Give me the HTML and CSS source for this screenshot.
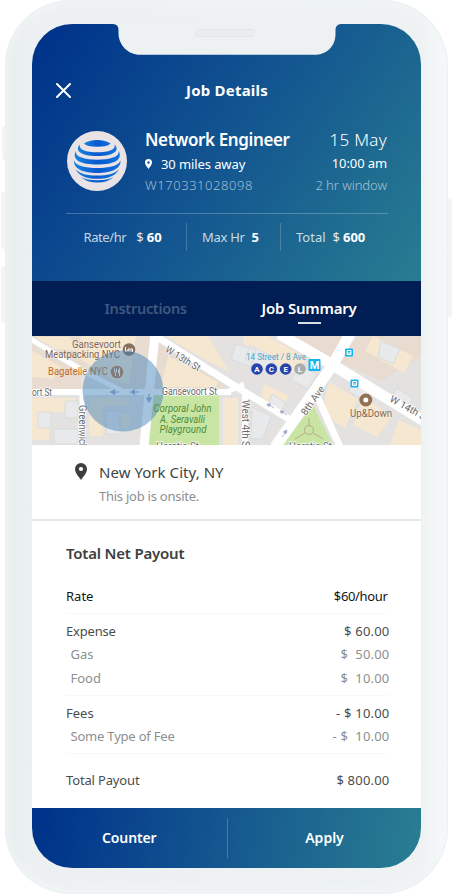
FILE: index.html
```html
<!DOCTYPE html>
<html lang="en">
<head>
<meta charset="utf-8">
<title>Job Details</title>
<link rel="stylesheet" href="styles.css">
</head>
<body>
<div class="phone">
  <span class="key key-mute"></span><span class="key key-up"></span><span class="key key-down"></span><span class="key key-power"></span>
  <div class="body">
  <main class="screen">
    <svg class="notch" viewBox="0 0 230 32" width="230" height="32">
      <path d="M0 0H225Q219.500 .5 219.500 6V10C219.500 22 211 30.800 198 30.800H24C12 30.800 2.500 21 2.500 9V6Q2.500 0 -3 0Z" transform="translate(4 0)" fill="#edf1f2"/>
      <rect x="83.500" y="5.500" width="59" height="7" rx="3" fill="#e9edee" stroke="#e2e6e7"/>
    </svg>
    <header class="header">
      <div class="titlebar">
        <svg class="close" viewBox="0 0 15 15" width="15" height="15"><path d="M1 1L14 14M14 1L1 14" stroke="#fff" stroke-width="2" stroke-linecap="round"/></svg>
        <h1 class="title">Job Details</h1>
      </div>
      <div class="profile">
        <svg class="logo" viewBox="0 0 60 60" width="60" height="60">
          <defs><linearGradient id="globe" x1="0" x2="1"><stop offset="0" stop-color="#1683df"/><stop offset=".5" stop-color="#0759cf"/><stop offset="1" stop-color="#1273dc"/></linearGradient></defs>
          <circle cx="30" cy="30" r="30" fill="#e9e3e6"/>
          <g fill="url(#globe)">
            <path d="M17 12.500Q22 9 30.300 9T43.500 12.500Q41 15.800 30.300 15.800T17 12.500Z"/>
            <path d="M13 13.500C11 18.500 19 21.300 30.300 21.300S49.500 18.500 47.500 13.500C53 19 48 25 30.300 25S7.500 19 13 13.500Z"/>
            <path d="M8.700 20C8 26 18 28.700 30.300 28.700S52.500 26 51.800 20C56 29 47 33.500 30.300 33.500S4.500 29 8.700 20Z"/>
            <path d="M7 29.500C9 35 18 37 30.300 37S51.500 35 53.500 29.500C54 38 44 42 30.300 42S6.500 38 7 29.500Z"/>
            <path d="M8.500 38C13 43 20 44.500 30.300 44.500S47.500 43 52 38C49 44.500 42 47.800 30.300 47.800S11.500 44.500 8.500 38Z"/>
            <path d="M14 46Q20 49.300 30.300 49.300T46.500 46Q41 51.500 30.300 51.500T14 46Z"/>
          </g>
        </svg>
        <div class="who">
          <h2 class="role">Network Engineer</h2>
          <p class="distance"><svg viewBox="0 0 12 17" width="7" height="10"><path fill="#fff" fill-rule="evenodd" d="M6 0a6 6 0 0 1 6 6c0 4-4 8-6 11C4 14 0 10 0 6a6 6 0 0 1 6-6Zm0 3.900a2.100 2.100 0 1 0 0 4.200 2.100 2.100 0 0 0 0-4.200Z"/></svg><span>30 miles away</span></p>
          <p class="code">W170331028098</p>
        </div>
        <div class="when">
          <p class="date">15 May</p>
          <p class="time">10:00 am</p>
          <p class="window">2 hr window</p>
        </div>
      </div>
      <div class="stats">
        <div class="stat stat-rate"><span class="label">Rate/hr</span><span class="cur">$</span><b>60</b></div>
        <div class="stat stat-max"><span class="label">Max Hr</span><b>5</b></div>
        <div class="stat stat-total"><span class="label">Total</span><span class="cur">$</span><b>600</b></div>
      </div>
    </header>
    <nav class="tabs">
      <span class="tab tab-off">Instructions</span>
      <span class="tab tab-on">Job Summary</span>
    </nav>
    <svg class="map" viewBox="1 0 390 109" width="390" height="109">
      <rect width="391" height="109" fill="#e4e2e1"/>
      <g fill="#e8dbd0">
        <path d="M0 0H122L114 55H95L0 0ZM0 8L50 38V56H0ZM128 8L195 50V56H120ZM258 0H318L300 26ZM328 0H391V20L350 45L305 25Z"/>
      </g>
      <g fill="#f6e7d0">
        <path d="M4 1H38L48 15L23 13ZM50 0H105L98 48L82 44L46 21ZM0 14L30 31L22 43L0 41ZM135 0H177L198 36L164 18ZM137 20L187 46L184 51H130ZM0 62H44V76H18V104H0ZM58 62H98V70H72V100H58ZM80 78H98V92H80ZM192 62H207V109H192ZM212 0H237L275 22L268 40L248 30L238 20H215ZM233 48L258 60L246 76L229 65ZM342 0L382 20L373 37L334 15ZM298 46L327 63L314 92L298 82L293 66ZM332 61L361 80L346 101L322 89ZM368 84L391 95V109H359Z"/>
      </g>
      <g fill="#e8e9eb" stroke="#dadbdd" stroke-width="1">
        <path d="M34 65H47V82H34ZM7 76H20V92H7ZM75 75H89V98H75ZM219 9L244 22L237 35L214 23ZM269 29L286 38L277 53L260 44ZM241 58L255 67L250 77L237 70ZM350 5L369 13L362 28L347 21ZM221 71L240 80L232 103H220ZM365 52L382 62L375 76L359 66ZM23 93H47V108H23ZM320 42L341 54L333 64L318 56ZM205 8L225 14L220 31L200 23Z"/>
      </g>
      <path d="M123 57H188V109H118ZM282 69L302 109H252Z" fill="#c9e5a3"/>
      <g fill="none" stroke="#fff">
        <path d="M-2 2L52 35L95 57" stroke-width="5"/>
        <path d="M-2 56H200" stroke-width="6"/>
        <path d="M51 56V109" stroke-width="5"/>
        <path d="M124 -2L113 110" stroke-width="9"/>
        <path d="M120 -3L199 47L258 83" stroke-width="7"/>
        <path d="M214 56V110" stroke-width="6"/>
        <path d="M198 55L213 48" stroke-width="5"/>
        <path d="M319 -2L301 30L244 111" stroke-width="11"/>
        <path d="M248 -2L302 29L393 85" stroke-width="11"/>
        <path d="M286 60L309 111" stroke-width="7"/>
      </g>
      <g fill="none" stroke="#b9a98a" stroke-width="1"><circle cx="278" cy="94" r="4.500"/><path d="M278 82V89M274 97L264 103M282 97L292 103"/></g>
      <g stroke="#9aa6c6" fill="#9aa6c6" stroke-width="1.200">
        <path d="M81 56H88M84 53.500L80 56L84 58.500M101 56H108M104 53.500L100 56L104 58.500M118 58V64M115.500 61.500L118 66L120.500 61.500"/>
        <path stroke-width=".8" d="M237 68L243 72M240 68L236 68L238 71M250 75L256 79M253 75L249 75L251 78M251 101L255 96M252 96L256 94L255 98"/>
      </g>
      <g class="road">
        <text x="133.500" y="15.500" textLength="39" lengthAdjust="spacingAndGlyphs" transform="rotate(31 133.500 15.500)">W 13th St</text>
        <text x="131" y="58.500" textLength="55" lengthAdjust="spacingAndGlyphs">Gansevoort St</text>
        <text x="1" y="60" textLength="20" lengthAdjust="spacingAndGlyphs">ort St</text>
        <text x="48" y="69" textLength="44" lengthAdjust="spacingAndGlyphs" transform="rotate(90 48 69)">Greenwich</text>
        <text x="211" y="64" textLength="50" lengthAdjust="spacingAndGlyphs" transform="rotate(90 211 64)">West 4th St</text>
        <text x="275" y="80" textLength="33" lengthAdjust="spacingAndGlyphs" transform="rotate(-55 275 80)">8th Ave</text>
        <text x="358" y="65" textLength="43" lengthAdjust="spacingAndGlyphs" transform="rotate(29 358 65)">W 14th St</text>
        <text x="125" y="114" textLength="43" lengthAdjust="spacingAndGlyphs">Horatio St</text>
        <text x="258" y="114" textLength="43" lengthAdjust="spacingAndGlyphs">Horatio St</text>
      </g>
      <circle cx="98" cy="13.500" r="6.300" fill="#87715f"/><path d="M94.500 11V16M94.500 15H101.500M101.500 16V13H97V15" stroke="#fff" fill="none"/>
      <g class="poi"><text x="41" y="11.500" textLength="49" lengthAdjust="spacingAndGlyphs">Gansevoort</text><text x="14" y="22" textLength="75" lengthAdjust="spacingAndGlyphs">Meatpacking NYC</text></g>
      <text class="food" x="17" y="39" textLength="60" lengthAdjust="spacingAndGlyphs">Bagatelle NYC</text>
      <circle cx="86" cy="36" r="6.300" fill="#c17a42"/><path d="M83.500 32.500V35Q83.500 36 84.500 36V40M85.500 32.500V36M88.500 40V32.500Q87 34 87.500 37H88.500" stroke="#fff" fill="none"/>
      <circle cx="92" cy="55" r="40.500" fill="#3d80b8" fill-opacity=".47"/>
      <g class="park"><text x="122.500" y="76" textLength="58" lengthAdjust="spacingAndGlyphs">Corporal John</text><text x="129" y="86.500" textLength="45" lengthAdjust="spacingAndGlyphs">A. Seravalli</text><text x="128.500" y="97" textLength="47" lengthAdjust="spacingAndGlyphs">Playground</text></g>
      <text class="transit" x="215" y="24" textLength="60" lengthAdjust="spacingAndGlyphs">14 Street / 8 Ave</text>
      <g fill="#2743ad"><circle cx="226" cy="33" r="5.800"/><circle cx="240.300" cy="33" r="5.800"/><circle cx="254.700" cy="33" r="5.800"/><circle cx="269" cy="33" r="5.800" fill="#a9abad"/></g>
      <g class="line"><text x="226" y="36">A</text><text x="240.300" y="36">C</text><text x="254.700" y="36">E</text><text x="269" y="36">L</text></g>
      <rect x="277.500" y="23" width="12" height="12" rx="1" fill="#16b4ee"/><text class="metro" x="283.500" y="33">M</text>
      <g fill="#16b4ee"><rect x="314" y="12.500" width="8" height="8" rx="1"/><rect x="319.500" y="43.500" width="8" height="8" rx="1"/></g>
      <g fill="none" stroke="#fff" stroke-width="1"><path d="M316 14.500H320V18.500H316ZM316 17H320M321.500 45.500H325.500V49.500H321.500ZM321.500 48H325.500"/></g>
      <circle cx="334.800" cy="64" r="4.500" fill="#fff" stroke="#957052" stroke-width="4"/>
      <text class="poi" x="319" y="80.500" textLength="42" lengthAdjust="spacingAndGlyphs">Up&amp;Down</text>
    </svg>
    <section class="place">
      <svg class="pin" viewBox="0 0 12 17" width="12" height="17"><path fill="#3b403f" fill-rule="evenodd" d="M6 0a6 6 0 0 1 6 6c0 4-4 8-6 11C4 14 0 10 0 6a6 6 0 0 1 6-6Zm0 3.900a2.100 2.100 0 1 0 0 4.200 2.100 2.100 0 0 0 0-4.200Z"/></svg>
      <div>
        <p class="city">New York City, NY</p>
        <p class="onsite">This job is onsite.</p>
      </div>
    </section>
    <section class="payout">
      <h3 class="heading">Total Net Payout</h3>
      <div class="group group-rate"><div class="row"><span class="n-rate">Rate</span><span class="v-rate">$60/hour</span></div></div>
      <div class="group group-expense">
        <div class="row"><span class="n-expense">Expense</span><span class="amount">$ 60.00</span></div>
        <div class="row sub"><span>Gas</span><span class="amount">$&nbsp; 50.00</span></div>
        <div class="row sub"><span>Food</span><span class="amount">$&nbsp; 10.00</span></div>
      </div>
      <div class="group group-fees">
        <div class="row"><span>Fees</span><span class="amount">- $ 10.00</span></div>
        <div class="row sub"><span class="n-fee">Some Type of Fee</span><span class="amount">- $&nbsp; 10.00</span></div>
      </div>
      <div class="row total"><span class="n-total">Total Payout</span><span class="amount">$ 800.00</span></div>
    </section>
    <footer class="actions"><span class="action counter">Counter</span><span class="action apply">Apply</span></footer>
  </main>
  </div>
</div>
</body>
</html>
```
FILE: styles.css
```css
* { box-sizing: border-box; margin: 0; padding: 0; }
body { width: 452px; height: 896px; overflow: hidden; background: #fff; font: 400 13px/20px "Noto Sans", sans-serif; white-space: nowrap; }
svg { display: block; flex: none; }

.phone { position: relative; width: 452px; height: 894px; padding: 0 4px 0 4.5px; }
.body { position: relative; height: 894px; padding: 24px 27px 0; border-radius: 66px; background: linear-gradient(90deg, #e6ebec, #ecf0f2 6%, #eef2f3 94%, #f6fafa); box-shadow: inset 0 0 2px 1px #eaf0f0, inset 0 0 12px 2px #f4f7f8; }
.key { position: absolute; width: 8px; background: #f3f5f5; border-radius: 3px; }
.key-mute { left: 2px; top: 126px; height: 34px; }
.key-up { left: 1px; top: 192px; height: 57px; }
.key-down { left: 1px; top: 266px; height: 57px; }
.key-power { right: 0; top: 199px; height: 118px; background: #f2f4f4; }

.screen { position: relative; width: 389.5px; height: 844px; border-radius: 40px; overflow: hidden; background: #fff; display: flex; flex-direction: column; }
.notch { position: absolute; left: 80px; top: 0; }

.header { height: 257px; flex: none; padding: 56px 33px 0 34.5px; background: linear-gradient(124deg, #00348b 5%, #125490 48%, #287d91 100%); color: #fff; }
.titlebar { position: relative; height: 20px; display: flex; justify-content: center; }
.close { position: absolute; left: -10px; top: 3px; }
.title { font-size: 15px; font-weight: 700; line-height: 20px; letter-spacing: .2px; }
.profile { display: flex; margin-top: 29px; height: 85px; border-bottom: 1px solid rgba(255,255,255,.24); }
.logo { margin: 2px 18px 0 1px; }
.role { font-size: 17px; line-height: 22px; font-weight: 600; letter-spacing: -.38px; }
.distance { display: flex; align-items: center; gap: 9px; margin-top: 3px; letter-spacing: -.1px; }
.code { margin-top: 1px; font-weight: 300; letter-spacing: .55px; color: rgba(255,255,255,.6); }
.when { margin-left: auto; margin-right: 1px; text-align: right; }
.date { font-size: 17px; line-height: 22px; font-weight: 300; letter-spacing: .3px; }
.time { margin-top: 2px; letter-spacing: -.1px; }
.window { margin-top: 2px; font-weight: 300; color: rgba(255,255,255,.6); letter-spacing: -.05px; }

.stats { display: flex; margin-top: 9px; height: 28px; }
.stat { display: flex; align-items: center; border-left: 1px solid rgba(255,255,255,.2); }
.stat b { font-weight: 700; }
.stat > * { margin-top: -1px; }
.label { color: rgba(255,255,255,.78); }
.stat .cur { margin: -1px 3px 0 10px; color: rgba(255,255,255,.88); }
.stat-rate { width: 120px; padding-left: 17.5px; border: 0; }
.stat-rate .label { letter-spacing: -.4px; }
.stat-max { width: 94px; padding-left: 15px; gap: 7px; }
.stat-max .label { letter-spacing: -.3px; }
.stat-total { padding-left: 15px; }
.stat-total .cur { margin-left: 7px; }

.tabs { height: 55px; flex: none; display: flex; padding: 17px 0 0 73px; background: #001e53; font-size: 15px; font-weight: 600; }
.tab-off { width: 157px; font-size: 14.5px; letter-spacing: -.3px; color: #3f5780; }
.tab-on { display: flex; flex-direction: column; align-items: center; letter-spacing: -.2px; color: #fff; }
.tab-on::after { content: ""; width: 23px; height: 2px; margin-top: 4px; background: #d9dfe8; }

.map { font: 10px Roboto, sans-serif; }
.road { fill: #686868; stroke: #fff; stroke-width: 1.500px; paint-order: stroke; }
.poi { fill: #826451; stroke: #fff6; stroke-width: 1px; paint-order: stroke; }
.park { fill: #4d8c3c; font-style: italic; }
.food { fill: #c16c2a; }
.transit { fill: #43a4cf; font-size: 8.5px; }
.line { fill: #fff; font-size: 8px; font-weight: 700; text-anchor: middle; }
.metro { fill: #fff; font-size: 11px; font-weight: 700; text-anchor: middle; }

.place { height: 76px; flex: none; display: flex; padding: 16px 0 0 43.5px; border-bottom: 2px solid #e6e7e8; color: #404544; }
.pin { margin: 2px 12px 0 0; }
.city { font-size: 15px; line-height: 22px; letter-spacing: .05px; }
.onsite { margin-top: 3px; color: #8d8f8f; letter-spacing: -.25px; }

.payout { flex: 1; padding: 21.500px 33px 0 34.5px; color: #4a4d4d; }
.heading { font-size: 15px; line-height: 20px; font-weight: 600; letter-spacing: -.2px; color: #3c4140; }
.group { border-bottom: 1px solid #f8f8f8; }
.group-rate { height: 51px; padding-top: 23px; color: #151515; }
.group-expense { height: 82px; padding-top: 7px; }
.group-fees { height: 58px; padding-top: 7px; }
.row { display: flex; justify-content: space-between; margin-right: -1px; margin-bottom: 3.500px; }
.sub { padding-left: 4.500px; color: #8d8f8f; }
.amount { letter-spacing: .2px; margin-right: -.5px; }
.v-rate { letter-spacing: -.35px; margin-right: 1.500px; }
.n-expense, .n-fee { letter-spacing: -.2px; }
.total { padding-top: 16px; }
.n-total { letter-spacing: -.15px; }

.actions { height: 60px; flex: none; display: flex; padding: 10px 0; background: linear-gradient(99deg, #00348b 4%, #14568f 48%, #2a7e92); color: #fff; font-size: 14px; font-weight: 600; }
.action { height: 40px; line-height: 40px; text-align: center; }
.counter { width: 196.500px; border-right: 1px solid rgba(255,255,255,.22); letter-spacing: -.15px; }
.apply { flex: 1; }
```
